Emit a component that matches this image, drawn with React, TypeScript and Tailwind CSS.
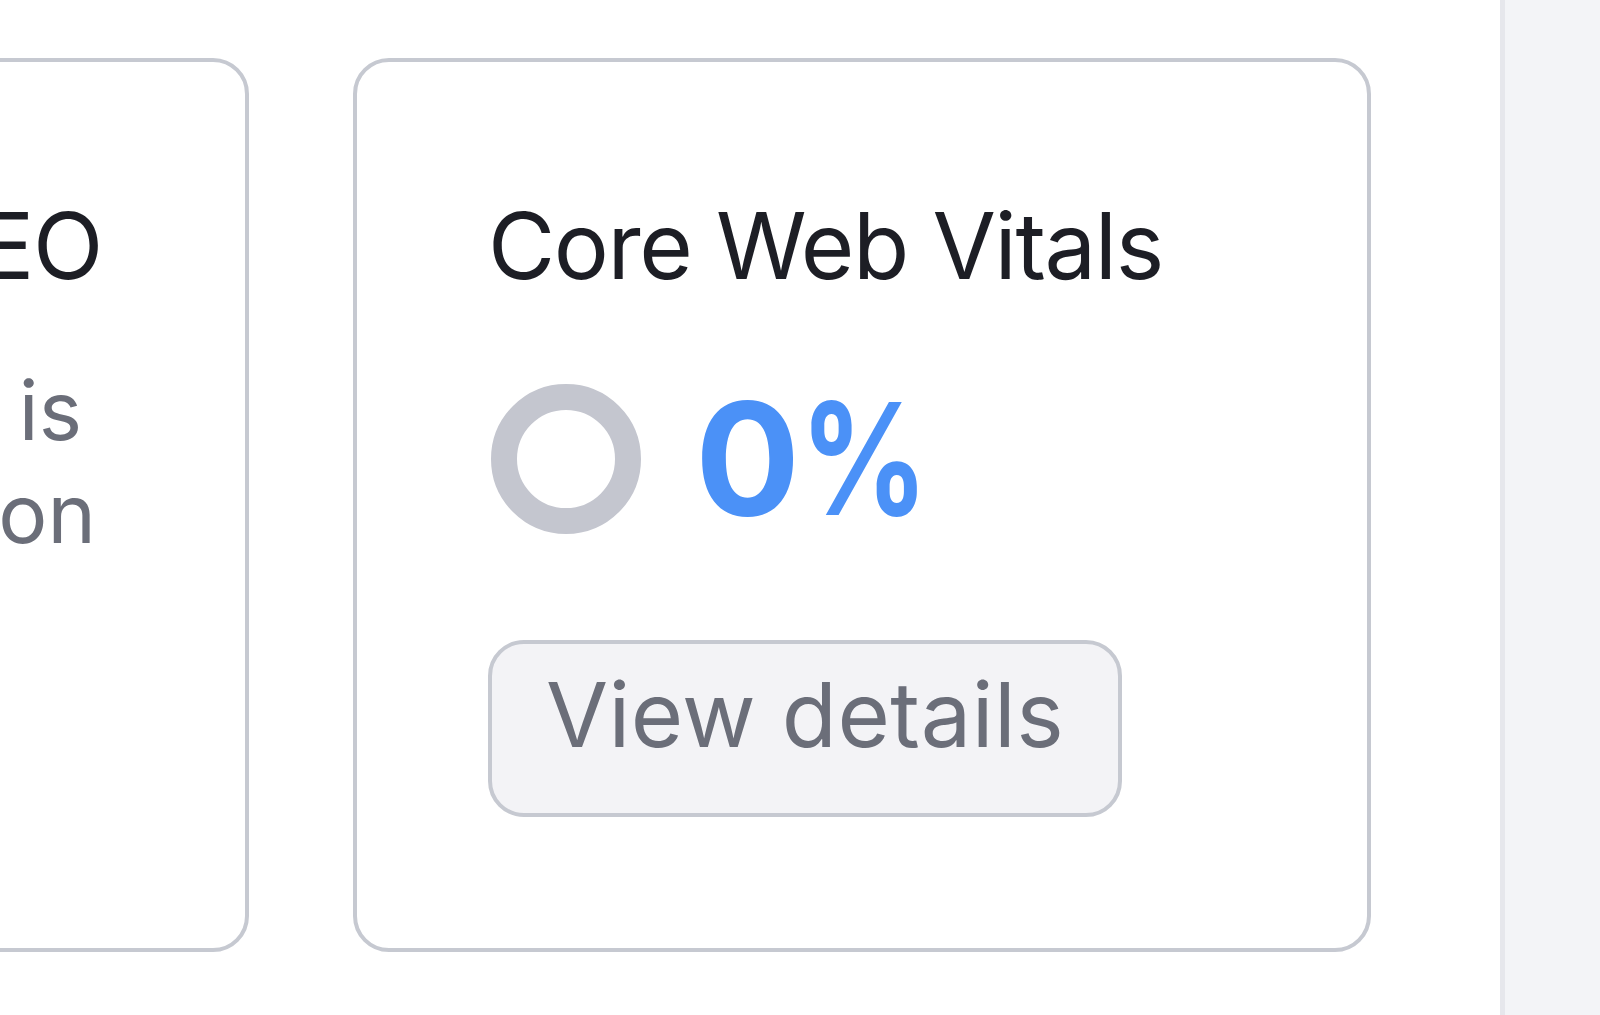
const cardClass =
  "shrink-0 w-[1018px] h-[894px] rounded-[36px] border-4 border-[#c6c9d1] bg-white px-[131px] pt-[138px]";

function ScoreRing() {
  return (
    <svg width="156" height="156" viewBox="0 0 156 156" className="shrink-0">
      <circle cx="78" cy="78" r="62" fill="none" stroke="#c4c6cf" strokeWidth="26" />
    </svg>
  );
}

function SeoCard() {
  return (
    <div className={cardClass}>
      <h2 className="flex justify-end pr-[12px] whitespace-nowrap text-[92px] leading-none tracking-[-0.015em] text-[#1d1e25]">
        Technical SEO
      </h2>
      <div className="mt-[67px] text-[82px] leading-[103px] text-[#6b6e79] whitespace-nowrap">
        <p className="flex justify-end pr-[32px]">Crawlability of your site is</p>
        <p className="flex justify-end pr-[18px]">checked for every page on</p>
      </div>
    </div>
  );
}

function VitalsCard() {
  return (
    <div className={cardClass}>
      <h2 className="text-[92px] leading-none tracking-[-0.015em] whitespace-nowrap text-[#1d1e25]">
        Core Web Vitals
      </h2>
      <div className="mt-[89px] flex items-center gap-[51px]">
        <ScoreRing />
        <span className="text-[156px] leading-none font-bold text-[#4b91f7]">
          0<span className="inline-block origin-left scale-x-[0.81]">%</span>
        </span>
      </div>
      <button className="mt-[103px] flex w-[634px] h-[177px] justify-center pt-[26px] rounded-[36px] border-4 border-[#c6c9d1] bg-[#f3f3f6] text-[90px] leading-none tracking-[0.005em] text-[#6b6e79]">
        View details
      </button>
    </div>
  );
}

export default function App() {
  return (
    <div className="flex h-[1015px] w-full bg-white font-['Inter',sans-serif]">
      <main className="flex-1 overflow-hidden">
        <div className="ml-[-769px] flex gap-[104px] pt-[58px]">
          <SeoCard />
          <VitalsCard />
        </div>
      </main>
      <aside className="w-[100px] shrink-0 border-l-[5px] border-[#e6e7ec] bg-[#f3f4f7]" />
    </div>
  );
}
